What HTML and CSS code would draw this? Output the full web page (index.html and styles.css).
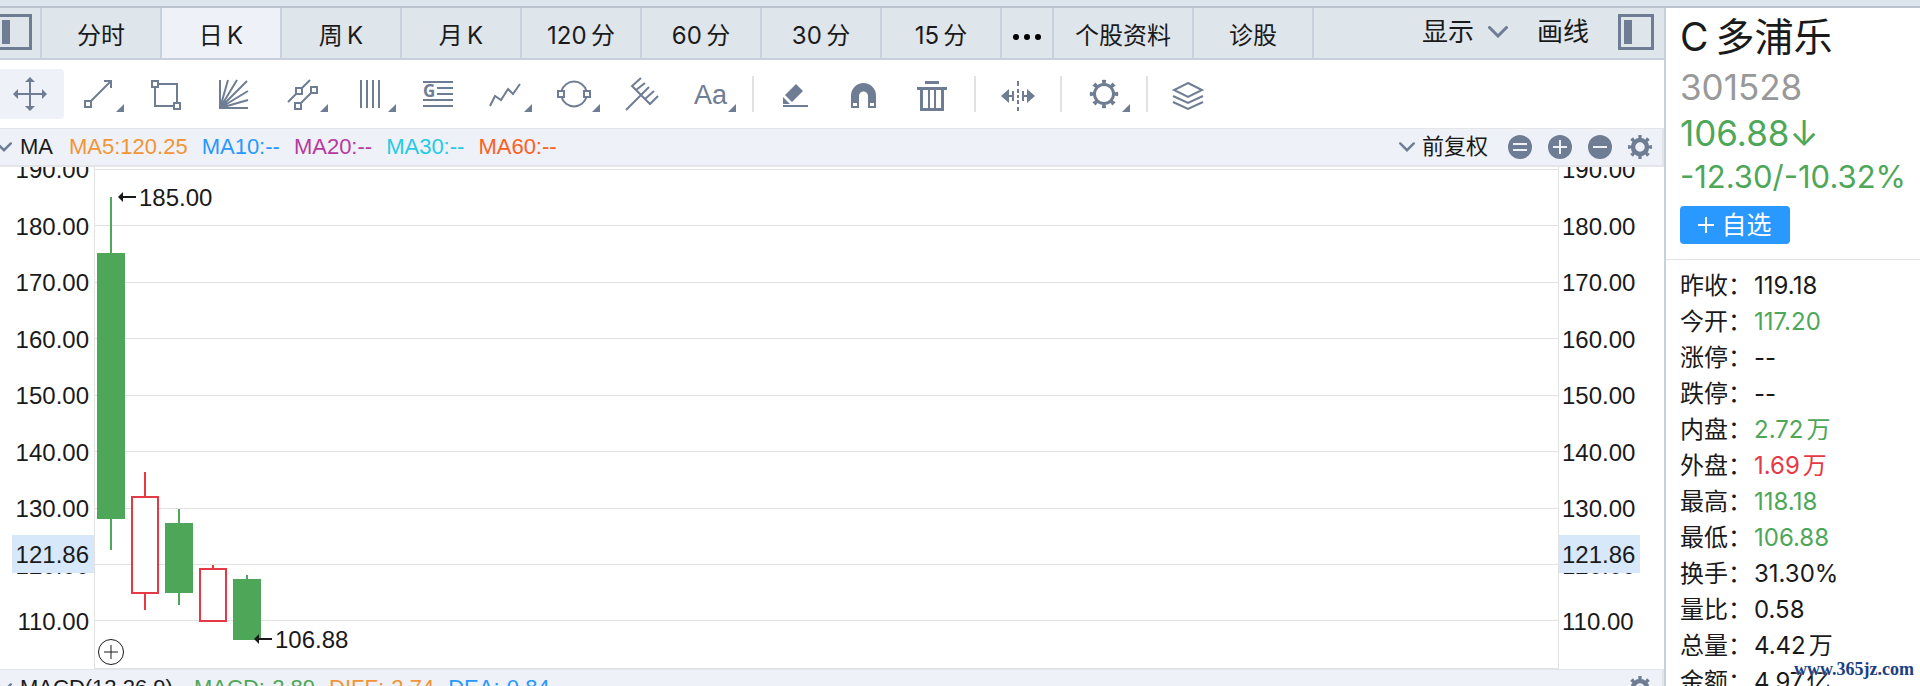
FILE: index.html
```html
<!DOCTYPE html>
<html lang="zh-CN">
<head>
    <meta charset="UTF-8">
    <meta name="viewport" content="width=device-width, initial-scale=1.0">
    <title>C 多浦乐 301528</title>
    <link rel="stylesheet" href="styles.css">
</head>
<body>
    <!-- shared icons -->
    <svg class="defs" width="0" height="0">
        <symbol id="panel" viewBox="0 0 36 36">
            <path d="M1.5 1.5h33v33h-33z" fill="none" stroke="currentColor" stroke-width="3"/>
            <path d="M6 6h8v24H6z" fill="currentColor"/>
        </symbol>
        <symbol id="chevron" viewBox="0 0 20 12">
            <path d="M1.500 1.500L10 10l8.500-8.500" fill="none" stroke="currentColor" stroke-width="3" stroke-linecap="round"/>
        </symbol>
        <symbol id="gear" viewBox="0 0 24 24">
            <circle cx="12" cy="12" r="7" fill="none" stroke="currentColor" stroke-width="4.500"/>
            <circle cx="12" cy="12" r="10.200" fill="none" stroke="currentColor" stroke-width="3.600" pathLength="16" stroke-dasharray="0.84 1.160" stroke-dashoffset="0.420"/>
        </symbol>
    </svg>

    <div class="strip"></div>
    <div class="layout">
        <main class="main">
            <nav class="tabs">
                <button class="tab tab-panel" aria-label="左侧栏"><svg width="36" height="36"><use href="#panel"/></svg></button>
                <button class="tab">分时</button>
                <button class="tab active">日&thinsp;K</button>
                <button class="tab">周&thinsp;K</button>
                <button class="tab">月&thinsp;K</button>
                <button class="tab">120&thinsp;分</button>
                <button class="tab">60&thinsp;分</button>
                <button class="tab">30&thinsp;分</button>
                <button class="tab">15&thinsp;分</button>
                <button class="tab tab-more" aria-label="更多">
                    <svg width="30" height="8"><circle cx="4" cy="4" r="3"/><circle cx="15" cy="4" r="3"/><circle cx="26" cy="4" r="3"/></svg>
                </button>
                <button class="tab tab-wide">个股资料</button>
                <button class="tab">诊股</button>
                <div class="tabs-right">
                    <button class="link-btn">显示<svg width="20" height="12"><use href="#chevron"/></svg></button>
                    <button class="link-btn">画线</button>
                    <button class="icon-btn" aria-label="右侧栏"><svg width="36" height="36"><use href="#panel"/></svg></button>
                </div>
            </nav>

            <div class="toolbar">
                <button class="tool active" aria-label="移动">
                    <svg viewBox="0 0 68 50"><path d="M34 10v30M19 25h30"/><path class="fill" d="M34 8l5 5H29zM34 42l5-5H29zM17 25l5-5v10zM51 25l-5-5v10z"/></svg>
                </button>
                <button class="tool more" aria-label="线段">
                    <svg viewBox="0 0 68 50"><path d="M21 32h6v6h-6zM27 32l20-20M40 12h7v7"/></svg>
                </button>
                <button class="tool" aria-label="矩形">
                    <svg viewBox="0 0 68 50"><path d="M20 12h6v6h-6zM42 34h6v6h-6zM26 15h19v19M23 18v19h19"/></svg>
                </button>
                <button class="tool" aria-label="扇形线">
                    <svg viewBox="0 0 68 50"><path d="M20 11v28h28M20 39l8-28M20 39l17-28M20 39l27-27M20 39l28-17M20 39l28-8"/></svg>
                </button>
                <button class="tool more" aria-label="平行线">
                    <svg viewBox="0 0 68 50"><path d="M20 33l8-8M34 19l8-8M28 19h6v6h-6zM27 34h6v6h-6zM43 18h6v6h-6zM33 34l10-10"/></svg>
                </button>
                <button class="tool more" aria-label="周期线">
                    <svg viewBox="0 0 68 50"><path d="M25 11v28M31 11v28M37 11v28M43 11v28"/></svg>
                </button>
                <button class="tool" aria-label="黄金分割">
                    <svg viewBox="0 0 68 50"><path d="M19 13h30M33 19h16M33 25h16M19 31h30M19 37h30"/><text class="glyph-g" x="19" y="28">G</text></svg>
                </button>
                <button class="tool more" aria-label="波浪线">
                    <svg viewBox="0 0 68 50"><path d="M18 37l5-10 6 4 7-11 5 5 7-10"/></svg>
                </button>
                <button class="tool more" aria-label="圆形">
                    <svg viewBox="0 0 68 50"><path d="M18 22h6v6h-6zM44 22h6v6h-6zM21.500 22a13 13 0 0 1 25 0M21.500 28a13 13 0 0 0 25 0"/></svg>
                </button>
                <button class="tool" aria-label="叉形线">
                    <svg viewBox="0 0 68 50"><path d="M18 41l23-23M33 9l-9 8 18 18 8-8M28 21l9-7M37 30l9-8M33 26l4-4"/></svg>
                </button>
                <button class="tool more" aria-label="文字">
                    <svg viewBox="0 0 68 50"><text class="glyph-aa" x="18" y="35">Aa</text></svg>
                </button>
                <span class="sep"></span>
                <button class="tool" aria-label="画笔">
                    <svg viewBox="0 0 68 50"><path class="fill" d="M34 15l7 7-11 11-7-7zM21 28l7 7h-7z"/><path d="M21 37h25"/></svg>
                </button>
                <button class="tool" aria-label="磁铁">
                    <svg viewBox="0 0 68 50"><path class="fill" fill-rule="evenodd" d="M21 39V26.500a12.500 12.500 0 0 1 25 0V39h-8V27a4.500 4.500 0 0 0-9 0v12zM23 34v3h4v-3zM40 34v3h4v-3z"/></svg>
                </button>
                <button class="tool" aria-label="删除">
                    <svg viewBox="0 0 68 50"><path class="fill" d="M27 12h14v3H27zM19 18h30v3H19z"/><path class="thick" d="M23.500 21v19.500h21V21"/><path d="M31 21v19M37 21v19"/></svg>
                </button>
                <span class="sep"></span>
                <button class="tool" aria-label="缩放">
                    <svg viewBox="0 0 68 50"><path class="fill" d="M17 27l8-7v14zM51 27l-8-7v14z"/><path d="M34 12v5M34 20v4M34 26v3M34 31v4M34 38v4M29 22v10M39 22v10M25 27h4M39 27h4"/></svg>
                </button>
                <span class="sep"></span>
                <button class="tool more" aria-label="设置">
                    <svg viewBox="0 0 68 50"><circle class="thick" cx="34" cy="25" r="9.500"/><circle class="teeth" cx="34" cy="25" r="12.200" pathLength="16" stroke-dasharray="0.8 1.200" stroke-dashoffset="0.400"/></svg>
                </button>
                <span class="sep"></span>
                <button class="tool" aria-label="图层">
                    <svg viewBox="0 0 68 50"><path d="M32 14l14 7-14 7-14-7zM17 27l15 7 15-7M17 33l15 7 15-7"/></svg>
                </button>
            </div>

            <div class="indicator">
                <svg class="toggle" width="16" height="10"><use href="#chevron"/></svg>
                <span class="name">MA</span>
                <span class="orange">MA5:120.25</span>
                <span class="blue">MA10:--</span>
                <span class="purple">MA20:--</span>
                <span class="cyan">MA30:--</span>
                <span class="deep">MA60:--</span>
                <div class="indicator-right">
                    <button class="adjust"><svg width="16" height="10"><use href="#chevron"/></svg>前复权</button>
                    <button class="icon-btn" aria-label="重置"><svg width="24" height="24"><circle cx="12" cy="12" r="12"/><path d="M5 9h14M5 15h14"/></svg></button>
                    <button class="icon-btn" aria-label="放大"><svg width="24" height="24"><circle cx="12" cy="12" r="12"/><path d="M5 12h14M12 5v14"/></svg></button>
                    <button class="icon-btn" aria-label="缩小"><svg width="24" height="24"><circle cx="12" cy="12" r="12"/><path d="M5 12h14"/></svg></button>
                    <button class="icon-btn" aria-label="指标设置"><svg width="24" height="24"><use href="#gear"/></svg></button>
                </div>
            </div>

            <div class="chart">
                <svg class="axis axis-left" width="94" height="502">
                    <g text-anchor="end">
                        <text x="89" y="11">190.00</text>
                        <text x="89" y="68">180.00</text>
                        <text x="89" y="124">170.00</text>
                        <text x="89" y="181">160.00</text>
                        <text x="89" y="237">150.00</text>
                        <text x="89" y="294">140.00</text>
                        <text x="89" y="350">130.00</text>
                        <text x="89" y="407">120.00</text>
                        <text x="89" y="463">110.00</text>
                        <rect class="mark" x="12" y="368" width="82" height="38"/>
                        <text x="89" y="396">121.86</text>
                    </g>
                </svg>
                <svg class="plot" height="502">
                    <g class="grid">
                        <line x2="100%" y1="2" y2="2"/>
                        <line x2="100%" y1="58" y2="58"/>
                        <line x2="100%" y1="115" y2="115"/>
                        <line x2="100%" y1="171" y2="171"/>
                        <line x2="100%" y1="228" y2="228"/>
                        <line x2="100%" y1="284" y2="284"/>
                        <line x2="100%" y1="341" y2="341"/>
                        <line x2="100%" y1="397" y2="397"/>
                        <line x2="100%" y1="453" y2="453"/>
                    </g>
                    <g class="down">
                        <path d="M15 30h2v353h-2z"/><path d="M2 86h28v266H2z"/>
                        <path d="M83 342h2v96h-2z"/><path d="M70 356h28v70H70z"/>
                        <path d="M151 408h2v10h-2z"/><path d="M138 412h28v61h-28z"/>
                    </g>
                    <g class="up">
                        <path d="M50 305v24M50 427v16M37 330h26v96H37z"/>
                        <path d="M118 398v4M105 402h26v52h-26z"/>
                    </g>
                    <path class="arrow" d="M41 30H25"/><path d="M23 30l5-5v10z"/>
                    <text x="44" y="39">185.00</text>
                    <path class="arrow" d="M177 472h-16"/><path d="M159 472l5-5v10z"/>
                    <text x="180" y="481">106.88</text>
                    <circle class="add" cx="16" cy="485" r="12.500"/>
                    <path class="add" d="M9 485h14M16 478v14"/>
                </svg>
                <svg class="axis axis-right" width="105" height="502">
                    <text x="3" y="11">190.00</text>
                    <text x="3" y="68">180.00</text>
                    <text x="3" y="124">170.00</text>
                    <text x="3" y="181">160.00</text>
                    <text x="3" y="237">150.00</text>
                    <text x="3" y="294">140.00</text>
                    <text x="3" y="350">130.00</text>
                    <text x="3" y="407">120.00</text>
                    <text x="3" y="463">110.00</text>
                    <rect class="mark" x="0" y="368" width="81" height="38"/>
                    <text x="3" y="396">121.86</text>
                </svg>
            </div>

            <div class="indicator">
                <svg class="toggle" width="16" height="10"><use href="#chevron"/></svg>
                <span class="name name-long">MACD(12,26,9)</span>
                <span class="green">MACD:-2.89</span>
                <span class="orange">DIFF:-2.74</span>
                <span class="blue">DEA:-0.84</span>
                <div class="indicator-right">
                    <button class="icon-btn" aria-label="指标设置"><svg width="24" height="24"><use href="#gear"/></svg></button>
                </div>
            </div>
        </main>

        <aside class="side">
            <div class="quote">
                <h1 class="stock">C&thinsp;多浦乐</h1>
                <p class="code">301528</p>
                <p class="price green">106.88↓</p>
                <p class="change green">-12.30/-10.32%</p>
                <button class="follow"><svg width="16" height="16"><path d="M0 8h16M8 0v16"/></svg>自选</button>
            </div>
            <table class="stats">
                <tr><th>昨收：</th><td>119.18</td></tr>
                <tr><th>今开：</th><td class="green">117.20</td></tr>
                <tr><th>涨停：</th><td>--</td></tr>
                <tr><th>跌停：</th><td>--</td></tr>
                <tr><th>内盘：</th><td class="green">2.72<span class="unit">万</span></td></tr>
                <tr><th>外盘：</th><td class="red">1.69<span class="unit">万</span></td></tr>
                <tr><th>最高：</th><td class="green">118.18</td></tr>
                <tr><th>最低：</th><td class="green">106.88</td></tr>
                <tr><th>换手：</th><td>31.30%</td></tr>
                <tr><th>量比：</th><td>0.58</td></tr>
                <tr><th>总量：</th><td>4.42<span class="unit">万</span></td></tr>
                <tr><th>金额：</th><td>4.97<span class="unit">亿</span></td></tr>
            </table>
        </aside>
    </div>
    <div class="watermark">www.365jz.com</div>
</body>
</html>
```

FILE: styles.css
```css
*{
    margin: 0;
    padding: 0;
    box-sizing: border-box;
}
body{
    height: 100vh;
    overflow: hidden;
    display: flex;
    flex-direction: column;
    position: relative;
    background: #fff;
    color: #1a1a1a;
    font-family: Inter, "Noto Sans CJK SC", sans-serif;
    font-size: 24px;
}
button{
    border: none;
    background: none;
    color: inherit;
    font: inherit;
    cursor: pointer;
}
svg{
    display: block;
    flex: none;
}
.defs{
    position: absolute;
}
.strip{
    flex: none;
    height: 8px;
    background: #dde5ec;
    border-bottom: 2px solid #b9c3cd;
}
.layout{
    flex: 1;
    min-height: 0;
    display: flex;
}
.main{
    flex: 1;
    min-width: 0;
    overflow: hidden;
}

/* tabs */
.tabs{
    display: flex;
    height: 52px;
    background: #dee5eb;
    border-bottom: 2px solid #c8d0db;
}
.tab{
    flex: none;
    width: 120px;
    border-right: 2px solid #c8d0db;
    white-space: nowrap;
}
.tab.active{
    background: #eef1f7;
}
.tab-panel{
    width: 42px;
    display: flex;
    align-items: center;
    justify-content: flex-end;
    padding-right: 8px;
    padding-bottom: 2px;
    color: #6e7d93;
}
.tab-more{
    width: 52px;
    display: flex;
    align-items: center;
    justify-content: center;
    padding-top: 8px;
}
.tab-wide{
    width: 140px;
}
.tabs-right{
    margin-left: auto;
    padding: 0 10px 2px 0;
    display: flex;
    align-items: center;
    gap: 29px;
}
.link-btn{
    display: flex;
    align-items: center;
    gap: 14px;
    font-size: 26px;
    line-height: 36px;
}
.link-btn svg, .icon-btn, .adjust svg, .toggle{
    color: #6e7d93;
}

/* drawing tools */
.toolbar{
    display: flex;
    align-items: center;
    height: 68px;
    margin-left: -4px;
}
.tool{
    position: relative;
    flex: none;
    width: 68px;
    height: 50px;
    border-radius: 4px;
}
.tool.active{
    background: #eef1f7;
}
.tool svg{
    width: 68px;
    height: 50px;
    fill: none;
    stroke: #6e7d93;
    stroke-width: 2;
}
.tool .fill, .tool text{
    fill: #6e7d93;
    stroke: none;
}
.tool .thick{
    stroke-width: 3;
}
.tool .teeth{
    stroke-width: 4;
}
.tool.more::after{
    content: "";
    position: absolute;
    right: 8px;
    bottom: 7px;
    border-left: 8px solid transparent;
    border-bottom: 8px solid #6e7d93;
}
.glyph-g{
    font: bold 17px "Open Sans", sans-serif;
}
.glyph-aa{
    font: 27px "Liberation Sans", sans-serif;
}
.sep{
    flex: none;
    width: 2px;
    height: 36px;
    margin: 0 8px;
    background: #e2e2e2;
}

/* indicator bars */
.indicator{
    display: flex;
    align-items: center;
    gap: 14px;
    height: 39px;
    background: #eef1f7;
    border: solid #e3e5e8;
    border-width: 1px 2px 2px 0;
    font-family: "Liberation Sans", "Noto Sans CJK SC", sans-serif;
    font-size: 22px;
    white-space: nowrap;
}
.toggle{
    margin: 0 -6px 0 -4px;
}
.name{
    margin-right: 2px;
}
.name-long{
    min-width: 158px;
}
.indicator-right{
    margin-left: auto;
    padding-right: 10px;
    display: flex;
    align-items: center;
    gap: 16px;
}
.adjust{
    display: flex;
    align-items: center;
    gap: 7px;
    margin-right: 4px;
    line-height: 30px;
}
.indicator-right circle{
    fill: #6e7d93;
}
.indicator-right use{
    fill: none;
}
.indicator-right path{
    stroke: #eef1f7;
    stroke-width: 2;
}

/* chart */
.chart{
    display: flex;
    height: 502px;
    font-family: "Liberation Sans", sans-serif;
    fill: #1a1a1a;
}
.plot{
    flex: 1;
    min-width: 0;
    border: 1px solid #e2e2e2;
    border-top: none;
    overflow: hidden;
}
.mark{
    fill: #d7e8fb;
}
.grid{
    stroke: #e2e2e2;
    shape-rendering: crispEdges;
}
.down{
    fill: #4ea758;
}
.up{
    fill: #fff;
    stroke: #e63946;
    stroke-width: 2;
}
.arrow{
    stroke: #1a1a1a;
    stroke-width: 2;
}
.add{
    fill: none;
    stroke: #1a1a1a;
}

/* quote panel */
.side{
    flex: none;
    width: 256px;
    border-left: 2px solid #c6d1de;
    background: #fff;
    overflow: hidden;
}
.quote{
    height: 252px;
    padding-left: 14px;
    border-bottom: 1px solid #e2e2e2;
    white-space: nowrap;
}
.stock{
    font-size: 39px;
    font-weight: 400;
    line-height: 58px;
}
.code{
    color: #999;
    font-size: 35px;
    line-height: 42px;
}
.price{
    font-size: 35px;
    line-height: 50px;
}
.change{
    font-size: 31px;
    line-height: 38px;
}
.follow{
    display: flex;
    align-items: center;
    justify-content: center;
    gap: 7px;
    width: 110px;
    height: 38px;
    margin-top: 10px;
    border-radius: 4px;
    background: #2998ff;
    color: #fff;
    font-size: 25px;
    line-height: 38px;
}
.follow path{
    stroke: #fff;
    stroke-width: 2;
}
.stats{
    margin: 8px 0 0 14px;
    border-collapse: collapse;
    white-space: nowrap;
}
.stats th{
    width: 74px;
    max-width: 74px;
    font-weight: 400;
    text-align: left;
}
.stats th, .stats td{
    height: 36px;
    line-height: 36px;
}
.unit{
    margin-left: 3px;
}
.watermark{
    position: absolute;
    right: 6px;
    bottom: 5px;
    color: #1b4083;
    font: bold 18px/24px "Liberation Serif", serif;
    text-shadow: 0 0 2px #fff;
}

.green{
    color: #4ea758;
}
.red{
    color: #e63946;
}
.orange{
    color: #f39436;
}
.blue{
    color: #2998ff;
}
.purple{
    color: #b8399f;
}
.cyan{
    color: #25cbe4;
}
.deep{
    color: #ff6022;
}
```
